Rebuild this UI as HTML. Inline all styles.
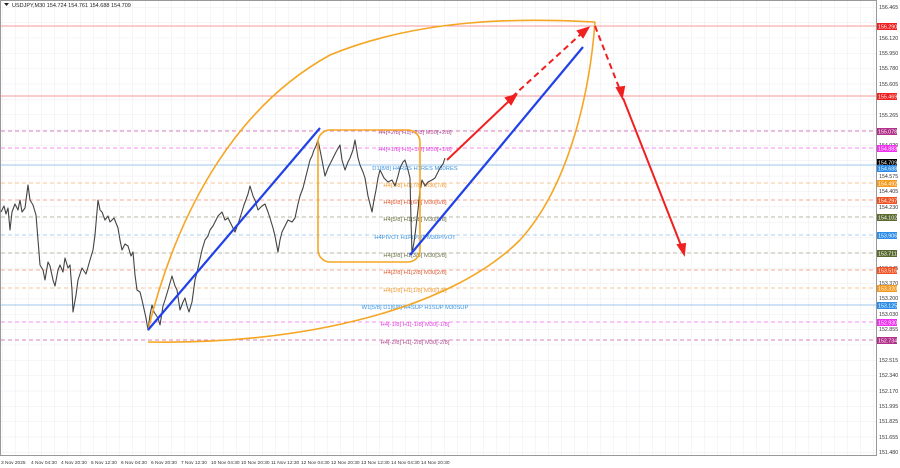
<!DOCTYPE html>
<html><head><meta charset="utf-8"><style>
html,body{margin:0;padding:0;background:#fff;}
svg{display:block;font-family:"Liberation Sans",sans-serif;}
</style></head><body>
<svg width="900" height="468" viewBox="0 0 900 468" xmlns="http://www.w3.org/2000/svg">
<defs>
<pattern id="g" width="13" height="15.35" patternUnits="userSpaceOnUse" x="2" y="7">
<path d="M0 0V16M0 0H14" stroke="#ececf0" stroke-width="1" fill="none"/>
</pattern>
</defs>
<rect x="0" y="0" width="900" height="468" fill="#fff"/>
<rect x="1" y="1" width="875" height="454" fill="url(#g)"/>
<rect x="0.5" y="0.5" width="876" height="455" fill="none" stroke="#999"/>
<g stroke-width="1" fill="none">
<line x1="1" x2="876" y1="26" y2="26" stroke="#f59a9a"/>
<line x1="1" x2="876" y1="96" y2="96" stroke="#f59a9a"/>
<line x1="1" x2="876" y1="131" y2="131" stroke="#d982bd" stroke-dasharray="4,3"/>
<line x1="1" x2="876" y1="148" y2="148" stroke="#f78cf2" stroke-dasharray="4,3"/>
<line x1="1" x2="876" y1="165" y2="165" stroke="#9cc8ee"/>
<line x1="1" x2="876" y1="183" y2="183" stroke="#f7c494" stroke-dasharray="4,3"/>
<line x1="1" x2="876" y1="200" y2="200" stroke="#f5a88e" stroke-dasharray="4,3"/>
<line x1="1" x2="876" y1="217" y2="217" stroke="#b8b8a4" stroke-dasharray="4,3"/>
<line x1="1" x2="876" y1="235" y2="235" stroke="#a9d0f0" stroke-dasharray="4,3"/>
<line x1="1" x2="876" y1="253" y2="253" stroke="#b8b8a4" stroke-dasharray="4,3"/>
<line x1="1" x2="876" y1="270" y2="270" stroke="#f5a88e" stroke-dasharray="4,3"/>
<line x1="1" x2="876" y1="288" y2="288" stroke="#f7c494" stroke-dasharray="4,3"/>
<line x1="1" x2="876" y1="305" y2="305" stroke="#9cc8ee"/>
<line x1="1" x2="876" y1="322" y2="322" stroke="#f78cf2" stroke-dasharray="4,3"/>
<line x1="1" x2="876" y1="340" y2="340" stroke="#d982bd" stroke-dasharray="4,3"/>
</g>
<g font-size="5.8" text-anchor="middle">
<text x="415" y="134" fill="#b04a90">H4[+2/8] H1[+2/8] M30[+2/8]</text>
<text x="415" y="151" fill="#e040e0">H4[+1/8] H1[+1/8] M30[+1/8]</text>
<text x="415" y="170" fill="#3a94e0">D1[8/8] H4RES H1RES M30RES</text>
<text x="415" y="187" fill="#f09a30">H4[7/8] H1[7/8] M30[7/8]</text>
<text x="415" y="204" fill="#e05a30">H4[6/8] H1[6/8] M30[6/8]</text>
<text x="415" y="221" fill="#667040">H4[5/8] H1[5/8] M30[5/8]</text>
<text x="415" y="239" fill="#3a94e0">H4PIVOT H1PIVOT M30PIVOT</text>
<text x="415" y="257" fill="#667040">H4[3/8] H1[3/8] M30[3/8]</text>
<text x="415" y="274" fill="#e05a30">H4[2/8] H1[2/8] M30[2/8]</text>
<text x="415" y="292" fill="#f09a30">H4[1/8] H1[1/8] M30[1/8]</text>
<text x="415" y="309" fill="#3a94e0">W1[5/8] D1[6/8] H4SUP H1SUP M30SUP</text>
<text x="415" y="326" fill="#e040e0">H4[-1/8] H1[-1/8] M30[-1/8]</text>
<text x="415" y="344" fill="#b04a90">H4[-2/8] H1[-2/8] M30[-2/8]</text>
</g>
<polyline fill="none" stroke="#444" stroke-width="1.1" stroke-linejoin="round" points="1,212 4,206 6,214 8,208 10,230 12,212 15,204 18,210 20,200 22,212 25,208 28,185 30,200 33,205 36,215 38,240 40,265 43,270 45,280 48,262 50,266 53,280 55,286 58,270 60,265 63,272 65,258 68,268 70,265 72,290 73,312 76,295 78,280 82,268 86,274 90,260 93,250 95,235 98,200 100,210 102,212 105,220 108,216 110,222 114,218 118,228 120,240 122,250 125,244 128,246 131,256 133,252 135,275 137,290 140,292 142,300 146,318 148,330 150,315 152,305 154,312 156,315 158,318 160,325 163,306 165,300 168,290 172,276 175,286 177,290 180,310 183,302 185,298 187,306 189,312 192,302 195,280 198,268 202,250 205,240 208,236 210,230 213,226 215,222 218,216 222,212 225,220 228,218 232,226 235,232 238,224 240,218 244,205 248,194 250,186 253,196 255,200 258,210 262,206 265,204 268,212 270,218 273,228 275,236 278,252 280,240 282,232 285,226 288,220 292,222 295,218 298,204 300,196 303,188 305,180 308,168 310,160 312,156 314,150 316,146 318,140 320,150 322,160 325,176 328,168 332,160 336,152 340,145 342,160 345,170 348,162 350,158 353,150 355,140 358,158 360,165 363,172 365,178 368,196 372,212 374,200 376,190 378,178 380,170 384,178 388,182 392,180 395,186 398,176 400,168 403,162 405,160 408,170 410,178 411,220 412,254 414,242 415,235 418,210 420,190 422,180 425,186 428,182 432,180 435,178 438,172 440,168 443,164 445,158"/>
<g fill="none" stroke="#f5a623" stroke-width="1.6">
<rect x="318" y="130" width="102" height="132" rx="12"/>
<path d="M148,330 C175,220 230,110 330,55 C420,18 520,18 595,22"/>
<path d="M148,342 C300,345 450,310 520,240 C570,185 590,90 595,22"/>
</g>
<g stroke="#2040e8" stroke-width="2.2">
<line x1="148" y1="330" x2="320" y2="128"/>
<line x1="410" y1="255" x2="583" y2="47"/>
</g>
<g stroke="#f02020" stroke-width="2" fill="#f02020">
<line x1="447" y1="160" x2="510" y2="100"/>
<polygon points="516,95 506,98 511,104"/>
<line x1="512" y1="97" x2="582" y2="33" stroke-dasharray="6,4"/>
<polygon points="588,28 578,31 583,37"/>
<line x1="595" y1="26" x2="620" y2="90" stroke-dasharray="6,4"/>
<polygon points="622,97 617,88 624,87"/>
<line x1="623" y1="98" x2="682" y2="248"/>
<polygon points="684,254 678,245 685,244"/>
</g>
<polygon points="4,3 9,3 6.5,6" fill="#222"/>
<text x="12" y="7" font-size="5.5" fill="#222">USDJPY,M30  154.724 154.761 154.688 154.709</text>
<g font-size="5.3" fill="#333">
<text x="879" y="9">156.465</text>
<text x="879" y="40">156.120</text>
<text x="879" y="55">155.950</text>
<text x="879" y="70">155.780</text>
<text x="879" y="86">155.605</text>
<text x="879" y="117">155.265</text>
<text x="879" y="147">154.920</text>
<text x="879" y="178">154.575</text>
<text x="879" y="193">154.405</text>
<text x="879" y="209">154.230</text>
<text x="879" y="270">153.545</text>
<text x="879" y="285">153.370</text>
<text x="879" y="300">153.200</text>
<text x="879" y="316">153.030</text>
<text x="879" y="331">152.855</text>
<text x="879" y="362">152.515</text>
<text x="879" y="377">152.340</text>
<text x="879" y="393">152.170</text>
<text x="879" y="408">151.995</text>
<text x="879" y="423">151.825</text>
<text x="879" y="439">151.655</text>
<text x="879" y="454">151.480</text>
</g>
<g font-size="5.3" fill="#fff">
<rect x="877" y="23" width="20" height="7" fill="#f02020"/><text x="878" y="28.5">156.290</text>
<rect x="877" y="93" width="20" height="7" fill="#f02020"/><text x="878" y="98.5">155.469</text>
<rect x="877" y="128" width="20" height="7" fill="#b0308a"/><text x="878" y="133.5">155.078</text>
<rect x="877" y="145" width="20" height="7" fill="#f030f0"/><text x="878" y="150.5">154.883</text>
<rect x="877" y="159" width="20" height="7" fill="#000"/><text x="878" y="164.5">154.709</text>
<rect x="877" y="165" width="20" height="7" fill="#2a8ce8"/><text x="878" y="170.5">154.688</text>
<rect x="877" y="180" width="20" height="7" fill="#f59a20"/><text x="878" y="185.5">154.492</text>
<rect x="877" y="197" width="20" height="7" fill="#f05020"/><text x="878" y="202.5">154.297</text>
<rect x="877" y="214" width="20" height="7" fill="#5a6a30"/><text x="878" y="219.5">154.102</text>
<rect x="877" y="232" width="20" height="7" fill="#2a8ce8"/><text x="878" y="237.5">153.906</text>
<rect x="877" y="250" width="20" height="7" fill="#5a6a30"/><text x="878" y="255.5">153.711</text>
<rect x="877" y="267" width="20" height="7" fill="#f05020"/><text x="878" y="272.5">153.516</text>
<rect x="877" y="285" width="20" height="7" fill="#f59a20"/><text x="878" y="290.5">153.320</text>
<rect x="877" y="302" width="20" height="7" fill="#2a8ce8"/><text x="878" y="307.5">153.125</text>
<rect x="877" y="319" width="20" height="7" fill="#f030f0"/><text x="878" y="324.5">152.930</text>
<rect x="877" y="337" width="20" height="7" fill="#b0308a"/><text x="878" y="342.5">152.734</text>
</g>
<g font-size="4.8" fill="#333">
<text x="1" y="464">3 Nov 2025</text>
<text x="31" y="464">4 Nov 04:30</text>
<text x="61" y="464">4 Nov 20:30</text>
<text x="91" y="464">5 Nov 12:30</text>
<text x="121" y="464">6 Nov 04:30</text>
<text x="151" y="464">6 Nov 20:30</text>
<text x="181" y="464">7 Nov 12:30</text>
<text x="211" y="464">10 Nov 04:30</text>
<text x="241" y="464">10 Nov 20:30</text>
<text x="271" y="464">11 Nov 12:30</text>
<text x="301" y="464">12 Nov 04:30</text>
<text x="331" y="464">12 Nov 20:30</text>
<text x="361" y="464">13 Nov 12:30</text>
<text x="391" y="464">14 Nov 04:30</text>
<text x="421" y="464">14 Nov 20:30</text>
</g>
</svg>
</body></html>
